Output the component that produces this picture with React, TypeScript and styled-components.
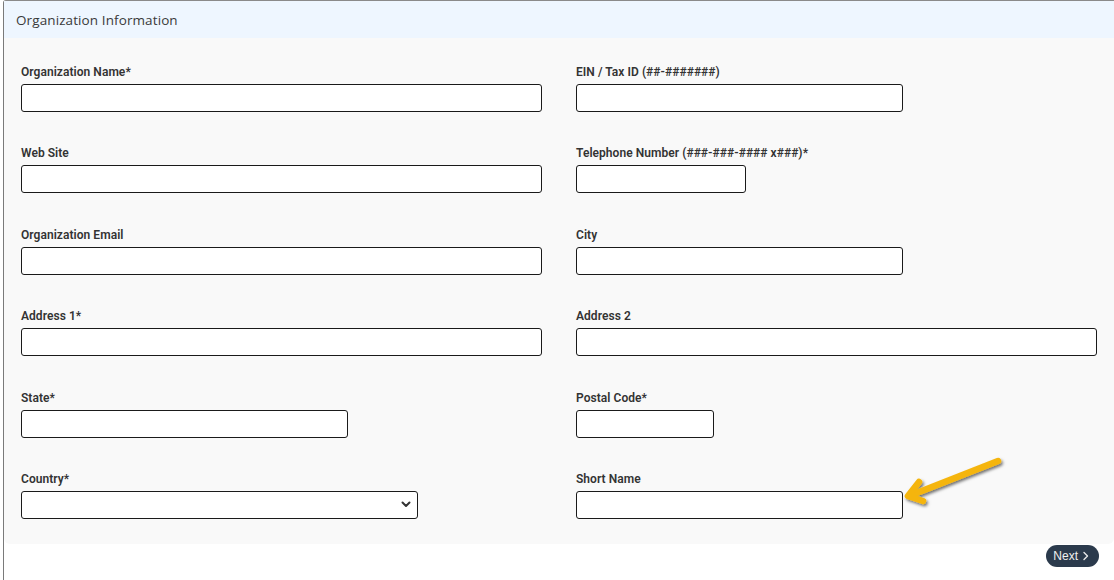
import React from 'react'
import styled, { createGlobalStyle } from 'styled-components'

const GlobalStyle = createGlobalStyle`
    html, body {
        margin: 0;
        padding: 0;
        background: #fff;
    }
    body {
        font-family: Roboto, "Liberation Sans", sans-serif;
    }
`

interface Field {
    label: string
    width: number
    select?: boolean
}

const rows: [Field, Field][] = [
    [{ label: 'Organization Name*', width: 521 }, { label: 'EIN / Tax ID (##-#######)', width: 327 }],
    [{ label: 'Web Site', width: 521 }, { label: 'Telephone Number (###-###-#### x###)*', width: 170 }],
    [{ label: 'Organization Email', width: 521 }, { label: 'City', width: 327 }],
    [{ label: 'Address 1*', width: 521 }, { label: 'Address 2', width: 521 }],
    [{ label: 'State*', width: 327 }, { label: 'Postal Code*', width: 138 }],
    [{ label: 'Country*', width: 397, select: true }, { label: 'Short Name', width: 327 }],
]

function FormField({ label, width, select }: Field): JSX.Element {
    return (
        <FieldBox>
            <Label>{label}</Label>
            {select ? (
                <SelectBox $width={width}>
                    <svg width="10" height="7" viewBox="0 0 10 7">
                        <path d="M1.5 1.5 L5 5 L8.5 1.5" fill="none" stroke="#333" strokeWidth="2" strokeLinecap="round" strokeLinejoin="round" />
                    </svg>
                </SelectBox>
            ) : (
                <Input $width={width} />
            )}
        </FieldBox>
    )
}

export default function App(): JSX.Element {
    return (
        <>
            <GlobalStyle />
            <Card>
                <Header>Organization Information</Header>
                <Panel>
                    {rows.map((r, i) => (
                        <React.Fragment key={i}>
                            <FormField {...r[0]} />
                            <FormField {...r[1]} />
                        </React.Fragment>
                    ))}
                    <Arrow width="110" height="52" viewBox="0 0 110 52">
                        <defs>
                            <filter id="shadow" x="-20%" y="-40%" width="140%" height="180%">
                                <feDropShadow dx="1.5" dy="2" stdDeviation="1.5" floodColor="#000" floodOpacity="0.55" />
                            </filter>
                        </defs>
                        <g filter="url(#shadow)" fill="none" stroke="#f5b50f" strokeWidth="6.5" strokeLinecap="round" strokeLinejoin="round">
                            <path d="M97 6 L8 41" />
                            <path d="M18 27 L7 41 L22 46" />
                        </g>
                    </Arrow>
                </Panel>
                <Footer>
                    <NextButton>
                        Next
                        <svg width="8" height="10" viewBox="0 0 8 10">
                            <path d="M2 1.5 L5.5 5 L2 8.5" fill="none" stroke="#e8e8e8" strokeWidth="1.4" strokeLinecap="round" strokeLinejoin="round" />
                        </svg>
                    </NextButton>
                </Footer>
            </Card>
        </>
    )
}

const Card = styled.div`
    margin-left: 3px;
    width: 1111px;
    min-height: 600px;
    border-left: 1px solid #7a7a7a;
    border-top: 1px solid #8a8a8a;
    border-top-left-radius: 3px;
    background: #fff;
    box-sizing: border-box;
`

const Header = styled.div`
    height: 37px;
    padding-left: 12px;
    display: flex;
    align-items: center;
    background-color: #eef6ff;
    font-family: "Open Sans", sans-serif;
    font-size: 13.5px;
    color: #3a3a3a;
    letter-spacing: 0.1px;
`

const Panel = styled.div`
    position: relative;
    display: grid;
    grid-template-columns: 555px 1fr;
    row-gap: 33.4px;
    padding: 26px 0 25px 17px;
    background-color: #f9f9f9;
    border-bottom-left-radius: 6px;
    border-bottom-right-radius: 6px;
`

const FieldBox = styled.div`
    display: flex;
    flex-direction: column;
`

const Label = styled.label`
    font-size: 12px;
    line-height: 16px;
    font-weight: 600;
    color: #333;
    margin-bottom: 4px;
    letter-spacing: 0.05px;
`

const Input = styled.div<{ $width: number }>`
    width: ${p => p.$width}px;
    height: 28px;
    box-sizing: border-box;
    border: 1px solid #1a1a1a;
    border-radius: 3px;
    background: #fff;
`

const SelectBox = styled(Input)`
    display: flex;
    align-items: center;
    justify-content: flex-end;
    padding-right: 6px;
`

const Arrow = styled.svg`
    position: absolute;
    left: 897px;
    top: 417px;
    overflow: visible;
`

const Footer = styled.div`
    display: flex;
    justify-content: flex-end;
    padding: 1px 15px 0 0;
`

const NextButton = styled.button`
    display: flex;
    align-items: center;
    gap: 4px;
    height: 22px;
    padding: 0 9px 0 7px;
    border: none;
    border-radius: 11px;
    background-color: #2b3a4c;
    color: #f0f0f0;
    font-family: "Liberation Sans", Arial, sans-serif;
    font-size: 12px;
`
